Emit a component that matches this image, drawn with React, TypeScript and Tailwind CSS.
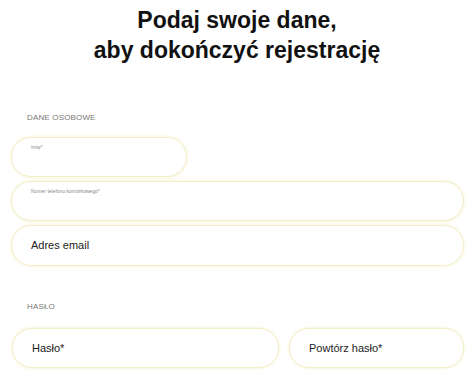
import React from 'react';

const Field = ({ label, small, className }: { label: string; small?: boolean; className?: string }) => (
    <div className={`h-10 rounded-full border-[1.5px] border-[#f2eec6] shadow-[0_0_3px_1px_#f8f6e0] bg-white px-[19px] ${className ?? ''}`}>
        {small ? (
            <div className="pt-[6px] text-[5px] text-[#8a8a8a]">{label}</div>
        ) : (
            <div className="flex h-full items-center text-[11px] text-[#222]">{label}</div>
        )}
    </div>
);

const App = () => {
    return (
        <div className="h-[376px] w-[474px] overflow-hidden bg-white font-['Liberation_Sans',sans-serif]">
            {/* Heading */}
            <h1 className="pt-[5px] text-center text-[23px] font-bold leading-[30px] text-[#111]">
                Podaj swoje dane,
                <br />
                aby dokończyć rejestrację
            </h1>

            {/* Personal data */}
            <div className="mt-[47px] pl-[27px] text-[8px] uppercase tracking-[0.02em] text-[#777]">Dane osobowe</div>
            <div className="mt-[13px] flex flex-col gap-[4px] pl-[11px] pr-[10px]">
                <Field label="Imię*" small className="w-[176px]" />
                <Field label="Numer telefonu komórkowego*" small />
                <Field label="Adres email" className="h-[41px]" />
            </div>

            {/* Password */}
            <div className="mt-[35px] pl-[27px] text-[8px] uppercase tracking-[0.02em] text-[#777]">Hasło</div>
            <div className="mt-[15px] flex gap-[10px] pl-[12px] pr-[10px]">
                <Field label="Hasło*" className="w-[267px]" />
                <Field label="Powtórz hasło*" className="flex-1" />
            </div>
        </div>
    );
};

export default App;
